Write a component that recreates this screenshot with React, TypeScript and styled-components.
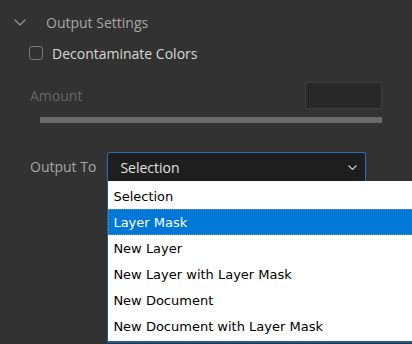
import React from "react";
import styled, { createGlobalStyle } from "styled-components";

const GlobalStyle = createGlobalStyle`
  html, body {
    margin: 0;
    padding: 0;
    background: #323232;
    overflow: hidden;
  }
  body {
    font-family: "Open Sans", "Noto Sans", sans-serif;
  }
`;

const Panel = styled.div`
  width: 412px;
  height: 344px;
  position: relative;
  overflow: hidden;
  background: #323232;
`;

const Header = styled.div`
  display: flex;
  align-items: center;
  height: 44px;
  padding-left: 14px;
  gap: 20px;
  color: #a6a6a6;
  font-size: 14px;
`;

const CheckRow = styled.label`
  display: flex;
  align-items: center;
  height: 18px;
  padding-left: 29px;
  gap: 9px;
  color: #d8d8d8;
  font-size: 14px;
`;

const Box = styled.span`
  width: 12px;
  height: 12px;
  border: 1px solid #7a7a7a;
  border-radius: 3px;
`;

const AmountRow = styled.div`
  display: flex;
  align-items: center;
  justify-content: space-between;
  margin-top: 20px;
  padding: 0 30px;
  height: 27px;
`;

const Dim = styled.span`
  color: #666;
  font-size: 14px;
`;

const NumberField = styled.div`
  width: 75px;
  height: 25px;
  background: #282828;
  border: 1px solid #3d3d3d;
`;

const Track = styled.div`
  margin: 8px 30px 0 40px;
  height: 6px;
  background: #6a6a6a;
`;

const OutputRow = styled.div`
  display: flex;
  align-items: center;
  margin-top: 29px;
  padding-left: 30px;
  gap: 11px;
  color: #a6a6a6;
  font-size: 14px;
`;

const SelectWrap = styled.div`
  position: relative;
`;

const Select = styled.div`
  box-sizing: border-box;
  width: 259px;
  height: 29px;
  display: flex;
  align-items: center;
  justify-content: space-between;
  padding: 0 8px 0 12px;
  background: #1e1e1e;
  border: 1px solid #2d6cb8;
  border-bottom: none;
  border-radius: 3px 3px 0 0;
  color: #e2e2e2;
  font-size: 14px;
`;

const List = styled.ul`
  position: absolute;
  left: 0;
  top: 29px;
  width: 330px;
  margin: 0;
  padding: 2px 0 2px 0;
  list-style: none;
  background: #fff;
  border: 1px solid #1c5a9c;
  border-top: none;
  border-bottom-width: 2px;
  font-family: "DejaVu Sans", "Liberation Sans", sans-serif;
  font-size: 13px;
`;

const Item = styled.li<{ $active?: boolean }>`
  box-sizing: border-box;
  height: 26px;
  display: flex;
  align-items: center;
  padding-left: 5px;
  color: ${(p) => (p.$active ? "#fff" : "#000")};
  background: ${(p) => (p.$active ? "#0078d7" : "transparent")};
  outline: ${(p) => (p.$active ? "1px dotted #6c8fb0" : "none")};
  outline-offset: -1px;
`;

const options = [
  "Selection",
  "Layer Mask",
  "New Layer",
  "New Layer with Layer Mask",
  "New Document",
  "New Document with Layer Mask",
];

export default function App() {
  return (
    <Panel>
      <GlobalStyle />
      <Header>
        <svg width="12" height="7" viewBox="0 0 12 7">
          <path d="M0.5 0.5 L6 6 L11.5 0.5" fill="none" stroke="#9a9a9a" strokeWidth="1.2" />
        </svg>
        <span>Output Settings</span>
      </Header>
      <CheckRow>
        <Box />
        <span>Decontaminate Colors</span>
      </CheckRow>
      <AmountRow>
        <Dim>Amount</Dim>
        <NumberField />
      </AmountRow>
      <Track />
      <OutputRow>
        <span>Output To</span>
        <SelectWrap>
          <Select>
            <span>Selection</span>
            <svg width="9" height="5" viewBox="0 0 9 5">
              <path d="M0.5 0.5 L4.5 4.5 L8.5 0.5" fill="none" stroke="#d0d0d0" strokeWidth="1.1" />
            </svg>
          </Select>
          <List>
            {options.map((o, i) => (
              <Item key={o} $active={i === 1}>
                {o}
              </Item>
            ))}
          </List>
        </SelectWrap>
      </OutputRow>
    </Panel>
  );
}
